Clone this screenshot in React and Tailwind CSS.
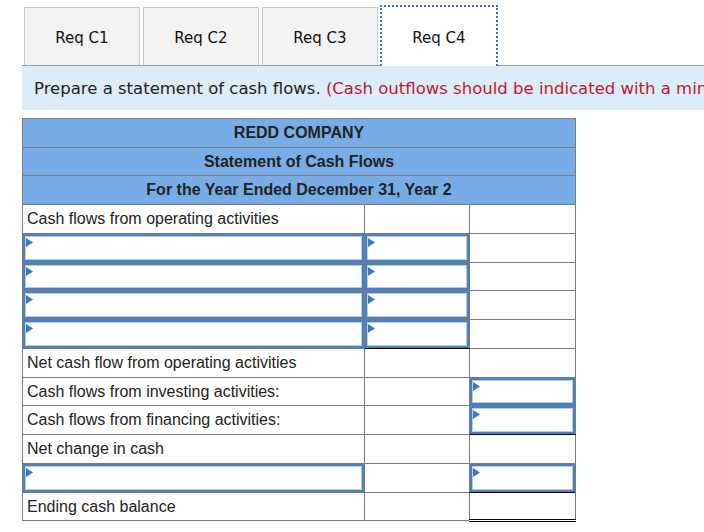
import React from "react";

function Tri() {
  return (
    <svg className="absolute left-[1px] top-[2px]" width="7" height="10" viewBox="0 0 7 10">
      <polygon points="0,0 7,4.5 0,9" fill="#3f78c0" />
    </svg>
  );
}

function InputBox({ extra = "" }) {
  return (
    <td className={"relative p-0 border border-[#7a7a7a] " + extra}>
      <div className="absolute inset-0 border-2 border-[#4a7fc0] shadow-[inset_0_0_0_1px_#b3cfee] bg-white">
        <Tri />
      </div>
    </td>
  );
}

function Cell({ children, extra = "" }) {
  return (
    <td className={"border border-[#7a7a7a] px-[4px] py-0 text-[16px] text-[#222] leading-none whitespace-nowrap " + extra}>
      {children}
    </td>
  );
}

export default function App() {
  const arial = { fontFamily: '"Liberation Sans", Arial, sans-serif' };
  return (
    <div className="w-[704px] h-[532px] bg-white overflow-hidden" style={{ fontFamily: '"DejaVu Sans", Verdana, sans-serif' }}>
      <div className="pt-[5px] pl-[22px]">
        {/* tabs */}
        <div className="flex items-end h-[61px] border-b border-[#9b9b9b] pl-[2px] gap-[3px]">
          {["Req C1", "Req C2", "Req C3"].map((t) => (
            <div key={t} className="w-[116px] h-[58px] bg-[#f3f3f3] border border-b-0 border-[#c9c9c9] flex items-center justify-center pt-[3px] text-[15px] text-[#111]">
              {t}
            </div>
          ))}
          <div className="w-[118px] h-[61px] -mb-px -ml-[1px] bg-white border-2 border-dotted border-[#3a72bb] border-b-0 flex items-center justify-center pt-[4px] text-[15px] text-[#111]">
            Req C4
          </div>
        </div>
        {/* instruction */}
        <div className="h-[44px] bg-[#dcedf9] flex items-center pl-[12px] pt-[3px] whitespace-nowrap overflow-hidden text-[16.5px] text-[#222]">
          Prepare a statement of cash flows.&nbsp;<span className="text-[#c0182c]">(Cash outflows should be indicated with a minus sign.)</span>
        </div>
        {/* table */}
        <table className="mt-[8px] border-collapse border border-[#7a7a7a] table-fixed w-[553px]" style={arial}>
          <colgroup>
            <col className="w-[342px]" />
            <col className="w-[105px]" />
            <col className="w-[106px]" />
          </colgroup>
          <tbody>
            <tr className="h-[29px] bg-[#78ace6]">
              <td colSpan={3} className="border border-[#7a7a7a] text-center font-bold text-[16px] text-[#222] leading-none">REDD COMPANY</td>
            </tr>
            <tr className="h-[28px] bg-[#78ace6]">
              <td colSpan={3} className="border border-[#7a7a7a] text-center font-bold text-[16px] text-[#222] leading-none">Statement of Cash Flows</td>
            </tr>
            <tr className="h-[29px] bg-[#78ace6]">
              <td colSpan={3} className="border border-[#7a7a7a] text-center font-bold text-[16px] text-[#222] leading-none">For the Year Ended December 31, Year 2</td>
            </tr>
            <tr className="h-[29px]">
              <Cell>Cash flows from operating activities</Cell>
              <Cell />
              <Cell />
            </tr>
            {[29, 28, 29, 29].map((h, i) => (
              <tr key={i} className={h === 29 ? "h-[29px]" : "h-[28px]"}>
                <InputBox />
                <InputBox extra={i === 3 ? "border-b-black" : ""} />
                <Cell />
              </tr>
            ))}
            <tr className="h-[29px]">
              <Cell>Net cash flow from operating activities</Cell>
              <Cell extra="border-t-black" />
              <Cell />
            </tr>
            <tr className="h-[28px]">
              <Cell>Cash flows from investing activities:</Cell>
              <Cell />
              <InputBox />
            </tr>
            <tr className="h-[29px]">
              <Cell>Cash flows from financing activities:</Cell>
              <Cell />
              <InputBox extra="border-b-black" />
            </tr>
            <tr className="h-[29px]">
              <Cell>Net change in cash</Cell>
              <Cell />
              <Cell extra="border-t-black" />
            </tr>
            <tr className="h-[29px]">
              <InputBox />
              <Cell />
              <InputBox extra="border-b-black" />
            </tr>
            <tr className="h-[28px]">
              <Cell>Ending cash balance</Cell>
              <Cell />
              <Cell extra="border-t-black border-b-[3px] border-b-black border-double" />
            </tr>
          </tbody>
        </table>
      </div>
    </div>
  );
}
